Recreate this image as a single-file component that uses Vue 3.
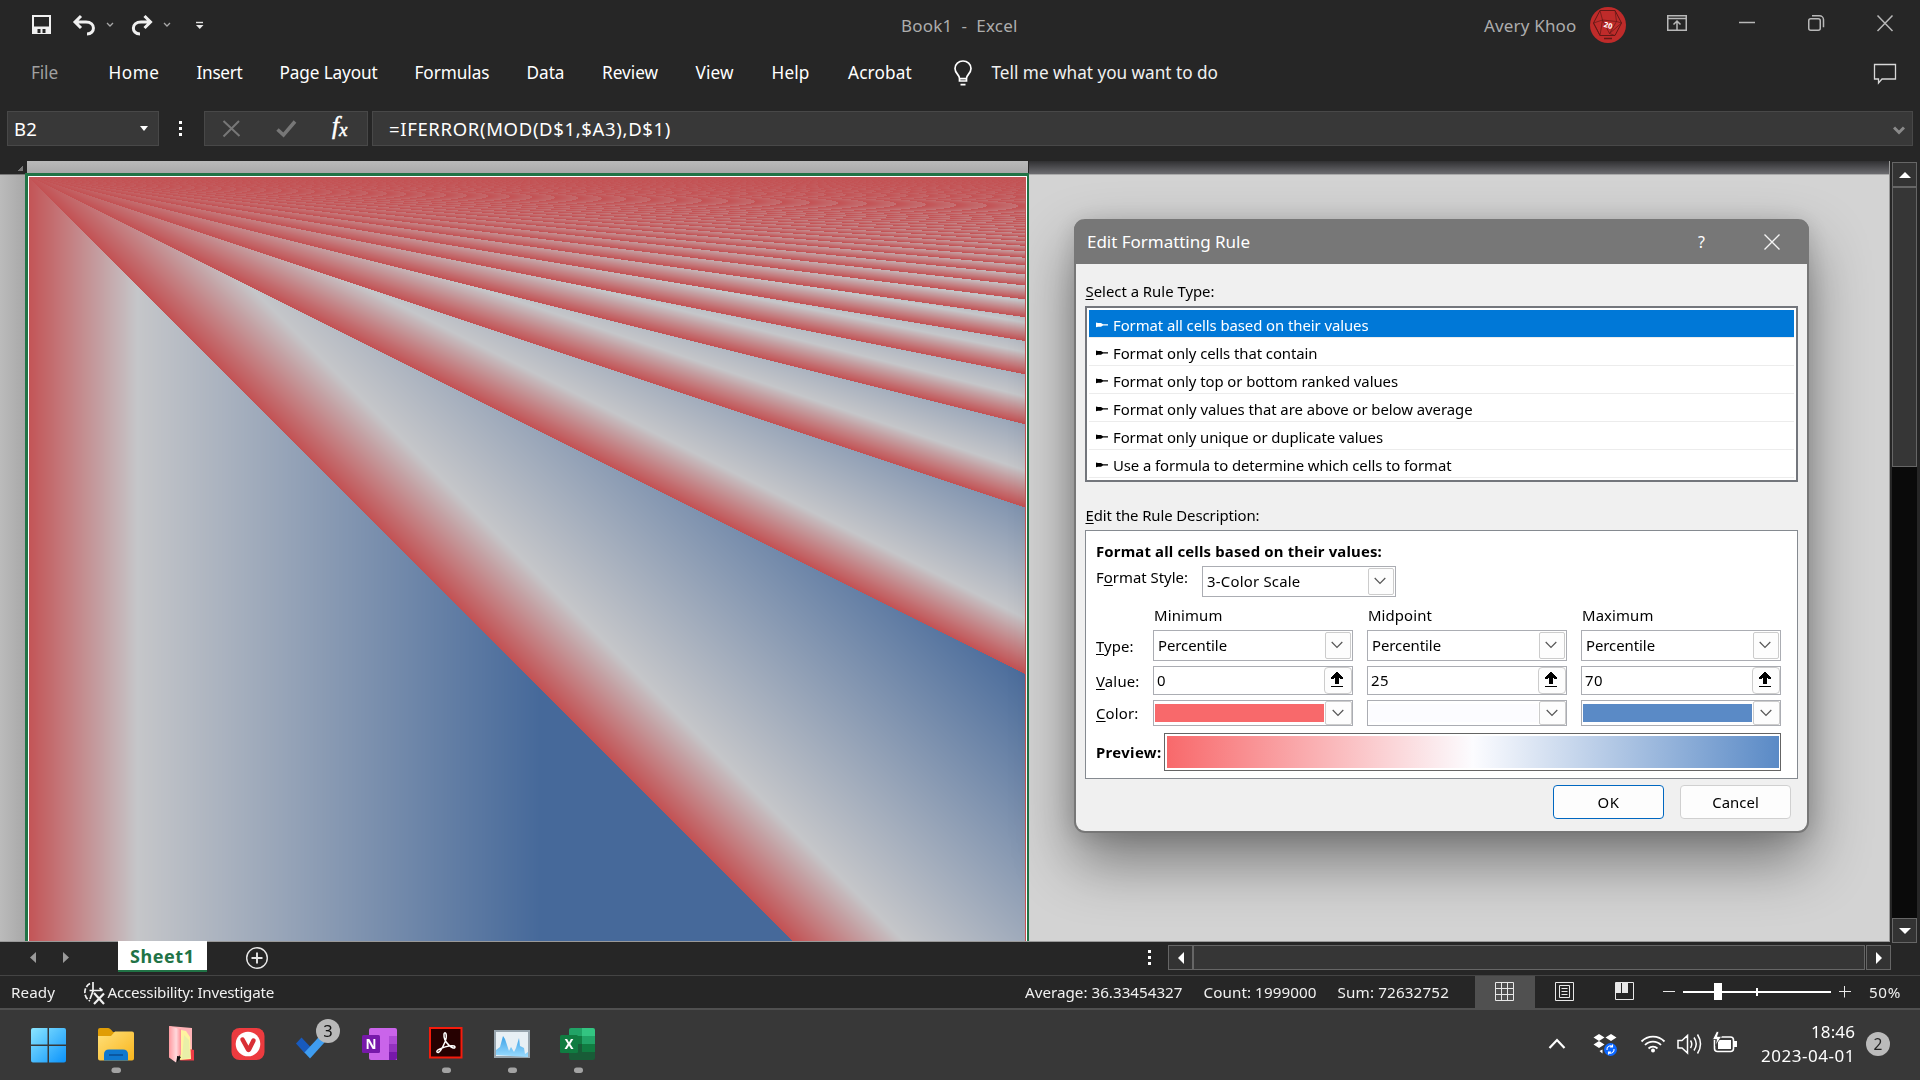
<script setup>
import { onMounted, ref } from 'vue'

// Stretches or tightens the tracking of a label so that it fills a given width.
const vFit = {
  mounted(el, binding) {
    el.style.whiteSpace = 'pre'
    const natural = el.getBoundingClientRect().width
    const n = el.textContent.length
    el.style.letterSpacing = ((binding.value - natural) / n).toFixed(3) + 'px'
  },
}

const menu = [
  { t: 'File', x: 31, w: 27, dim: true },
  { t: 'Home', x: 108.5, w: 51 },
  { t: 'Insert', x: 196.5, w: 46 },
  { t: 'Page Layout', x: 279.5, w: 98 },
  { t: 'Formulas', x: 414.5, w: 75 },
  { t: 'Data', x: 526.5, w: 38 },
  { t: 'Review', x: 602, w: 56 },
  { t: 'View', x: 695.5, w: 38 },
  { t: 'Help', x: 771.5, w: 38 },
  { t: 'Acrobat', x: 848, w: 64 },
]
menu.forEach((m, i) => {
  const prev = menu[i - 1]
  m.gap = prev ? m.x - prev.x - prev.w : m.x
})

const rules = [
  ['Format all cells based on their values', 255.5],
  ['Format only cells that contain', 204.5],
  ['Format only top or bottom ranked values', 285],
  ['Format only values that are above or below average', 359.5],
  ['Format only unique or duplicate values', 270],
  ['Use a formula to determine which cells to format', 338.5],
]

const columns = [
  { head: 'Minimum', w: 68.5, value: '0', vw: 9, color: '#f8696b' },
  { head: 'Midpoint', w: 64, value: '25', vw: 18, color: '#fcfcff' },
  { head: 'Maximum', w: 71.5, value: '70', vw: 18, color: '#5a8ac6' },
]

const sheet = ref(null)

// Three-colour scale stops: value, r, g, b
const stops = [
  [0, 195, 82, 84],
  [111, 197, 198, 201],
  [514, 70, 105, 154],
]
function shade(v) {
  if (v >= stops[2][0]) return stops[2].slice(1)
  const k = v < stops[1][0] ? 0 : 1
  const a = stops[k]
  const b = stops[k + 1]
  const f = (v - a[0]) / (b[0] - a[0])
  return [1, 2, 3].map((i) => a[i] + (b[i] - a[i]) * f)
}

onMounted(() => {
  const c = sheet.value
  const g = c.getContext('2d')
  const img = g.createImageData(c.width, c.height)
  const lut = Array.from({ length: 1001 }, (_, v) => shade(v))
  let p = 0
  for (let y = 0; y < c.height; y++) {
    for (let x = 0; x < c.width; x++) {
      const v = x === c.width - 1 ? 0 : (x + 3) % (y + 3)
      const rgb = lut[v]
      img.data[p++] = rgb[0]
      img.data[p++] = rgb[1]
      img.data[p++] = rgb[2]
      img.data[p++] = 255
    }
  }
  g.putImageData(img, 0, 0)
})
</script>

<template>
  <div class="screen">
    <header class="titlebar">
      <svg class="qat" width="230" height="50" viewBox="0 0 230 50" fill="none">
        <path d="M32 15h19v19H32z" fill="#f0f0f0" />
        <path d="M34 17h15v9.500H34z" fill="#262626" />
        <path d="M37.500 29h8v4h-8z" fill="#262626" />
        <path d="M40.500 29h2v4h-2z" fill="#f0f0f0" />
        <path d="M81 16 75 22l6 6M76 22h10c10 0 9.500 12 1 12" stroke="#f0f0f0" stroke-width="3" />
        <path d="M107 23l3 3 3-3M164 23l3 3 3-3" stroke="#a8a8a8" stroke-width="1.300" />
        <path d="M144.500 16l6 6-6 6M150 22h-9c-10 0-10 12-1 12" stroke="#f0f0f0" stroke-width="3" />
        <path d="M196 22.500h7" stroke="#e0e0e0" stroke-width="1.400" />
        <path d="M196 25h7.500l-3.750 4z" fill="#e8e8e8" />
      </svg>
      <span class="doc"><span v-fit="116.500">Book1&nbsp; - &nbsp;Excel</span></span>
      <span class="user"><span v-fit="92.500">Avery Khoo</span></span>
      <svg class="winctl" width="340" height="50" viewBox="1580 0 340 50" fill="none">
        <circle cx="1608" cy="25" r="18" fill="#bf2b2a" />
        <g stroke="#611816" stroke-width="1">
          <path d="M1600 10.500h15l6.500 12.500-6.500 12.500h-15l-6.500-12.500z" />
          <path d="M1600 10.500l2.500 9.500 14 1.500-1.500-11zM1602.500 20l-9 3 6.500 12.500 2.500-15.500 7 13.500 12-10.500-5-1.500-7 12 5.500 2" stroke-width=".7" />
        </g>
        <text x="1604" y="28" font-size="7.500" font-weight="700" fill="#fff" transform="rotate(15 1608 25)">20</text>
        <path d="M1604 38.500h8" stroke="#611816" stroke-width="1.500" />
        <g stroke="#b8b8b8" stroke-width="1.500">
          <path d="M1667.750 15.750h18.500v14.500h-18.500zM1668 18.500h18M1677 29.500v-8.500M1673.500 24.500l3.500-3.500 3.500 3.500" />
          <path d="M1739 22.500h16" />
          <rect x="1808.750" y="18.750" width="11.500" height="11.500" rx="2" />
          <path d="M1812 15.750h7.500a4 4 0 0 1 4 4v7.500" />
          <path d="M1877.500 15.500l15 15.500M1892.500 15.500l-15 15.500" />
        </g>
      </svg>
    </header>

    <nav class="menu">
      <span v-for="m in menu" :key="m.t" class="mi" :class="{ dim: m.dim }" :style="{ marginLeft: m.gap + 'px', width: m.w + 'px' }"><span v-fit="m.w">{{ m.t }}</span></span>
      <svg class="bulb" width="20" height="28" viewBox="0 0 20 28" fill="none" stroke="#fff" stroke-width="1.700">
        <path d="M6.500 18.500c0-4-4.500-5-4.500-10a8 7.500 0 0 1 16 0c0 5-4.500 6-4.500 10v2.500h-7zM6.500 18.700h7M7.500 24.700h5" />
      </svg>
      <span class="tell"><span v-fit="226.500">Tell me what you want to do</span></span>
      <svg class="comment" width="24" height="24" viewBox="0 0 24 24" fill="none" stroke="#d8d8d8" stroke-width="1.300">
        <path d="M1.500 2.500h21v14.500H9L5.500 21v-4h-4z" />
      </svg>
    </nav>

    <section class="formulabar">
      <div class="namebox"><span v-fit="23">B2</span><i class="tri"></i></div>
      <div class="dots"><i></i><i></i><i></i></div>
      <div class="fbuttons">
        <svg width="162" height="33" viewBox="0 0 162 33" fill="none">
          <path d="M18.500 9l16 15M34 9L18.500 24.500" stroke="#777" stroke-width="2" />
          <path d="M72.500 17.500l6 5.500L90 9.500" stroke="#777" stroke-width="3.500" />
          <text x="127" y="22" class="fx">f</text>
          <text x="134" y="24" class="fx small">x</text>
        </svg>
      </div>
      <div class="formula">
        <span v-fit="282">=IFERROR(MOD(D$1,$A3),D$1)</span>
        <svg width="12" height="9" viewBox="0 0 12 9" fill="none" stroke="#8a8a8a" stroke-width="3"><path d="M1 1.500l5 5 5-5" /></svg>
      </div>
    </section>

    <main class="work">
      <div class="rowhead">
        <div class="corner"><i></i></div>
        <div class="rows"></div>
      </div>
      <div class="cells">
        <div class="colhead"></div>
        <div class="selection"><canvas ref="sheet" width="997" height="764"></canvas></div>
      </div>
      <div class="empty"><div class="emptyhead"></div></div>
      <div class="vscroll">
        <div class="sbtn"><i class="up"></i></div>
        <div class="vthumb"></div>
        <div class="vtrack"></div>
        <div class="sbtn"><i class="down"></i></div>
      </div>
    </main>

    <section class="tabs">
      <svg class="tabnav" width="118" height="33" viewBox="0 0 118 33" fill="#9a9a9a"><path d="M36 10v11l-6-5.500zM63 10v11l6-5.500z" /></svg>
      <div class="tab"><span v-fit="64.500">Sheet1</span></div>
      <svg class="add" width="24" height="24" viewBox="0 0 24 24" fill="none" stroke="#e8e8e8"><circle cx="12" cy="12" r="10.300" stroke-width="1.400" /><path d="M12 6.500v11M6.500 12h11" stroke-width="1.900" /></svg>
      <div class="dots tabdots"><i></i><i></i><i></i></div>
      <div class="hscroll">
        <div class="sbtn"><i class="left"></i></div>
        <div class="hthumb"></div>
        <div class="sbtn"><i class="right"></i></div>
      </div>
    </section>

    <footer class="status">
      <span class="s1"><span v-fit="44">Ready</span></span>
      <svg class="acc" width="24" height="24" viewBox="0 0 24 24" fill="none" stroke="#f0f0f0" stroke-width="1.700">
        <path d="M8 2.500A10 10 0 0 0 8 20" stroke-dasharray="5 1.500" />
        <path d="M11 1v10M7.500 9.500h13M17.500 7l3 2.500M11 10l-3 8" />
        <path d="M12 12l10 11M22 12.500l-10 10.500" stroke-width="2.200" />
      </svg>
      <span class="s2"><span v-fit="166.500">Accessibility: Investigate</span></span>
      <span class="s3"><span v-fit="157.500">Average: 36.33454327</span></span>
      <span class="s4"><span v-fit="113">Count: 1999000</span></span>
      <span class="s5"><span v-fit="111.500">Sum: 72632752</span></span>
      <svg class="views" width="376" height="32" viewBox="1475 976 376 32" fill="none" stroke="#e8e8e8" stroke-width="1">
        <path d="M1475 976h60v32h-60z" fill="#505050" stroke="none" />
        <path d="M1495.500 982.500h18v18h-18zM1501.500 982.500v18M1507.500 982.500v18M1495.500 988.500h18M1495.500 994.500h18" />
        <path d="M1555.500 982.500h18v18h-18zM1559.500 985.500h10v12h-10zM1561.500 988.500h6M1561.500 991.500h6M1561.500 994.500h6" />
        <path d="M1615.500 982.500h18v17h-18z" /><path d="M1616 983h5v10h-5zM1622 983h6v10h-6z" fill="#e8e8e8" stroke="none" />
        <path d="M1663 991.500h12M1839 991.500h12M1844.500 986v11.500" />
        <path d="M1683 992h148" stroke="#fff" stroke-width="2" /><path d="M1714 983h8v17h-8zM1756 988h2v8h-2z" fill="#fff" stroke="none" />
      </svg>
      <span class="s6"><span v-fit="32">50%</span></span>
    </footer>

    <footer class="taskbar">
      <svg class="apps" width="620" height="70" viewBox="0 1010 620 70">
        <defs>
          <linearGradient id="win" x1="0" y1="0" x2="1" y2="1"><stop offset="0" stop-color="#8be6ff" /><stop offset="1" stop-color="#0b93fb" /></linearGradient>
          <linearGradient id="fold" x1="0" y1="0" x2="1" y2="1"><stop offset="0" stop-color="#ffe07a" /><stop offset="1" stop-color="#f9b51c" /></linearGradient>
          <linearGradient id="pink" x1="0" y1="0" x2="1" y2="0"><stop offset="0" stop-color="#ff9aa0" /><stop offset=".6" stop-color="#ffd9dc" /><stop offset="1" stop-color="#ff8f95" /></linearGradient>
          <linearGradient id="perf" x1="0" y1="0" x2="0" y2="1"><stop offset="0" stop-color="#3aa0e6" /><stop offset="1" stop-color="#9bdcff" /></linearGradient>
        </defs>
        <path fill="url(#win)" d="M33 1028h14.500v16.500H31V1030q0-2 2-2zM49 1028h15q2 0 2 2v14.500H49zM31 1046h16.500v16.500H33q-2 0-2-2zM49 1046h17v14.500q0 2-2 2H49z" />
        <path fill="#e09d06" d="M98 1030q0-2 2-2h8q2 0 5 4h8v8H98z" />
        <path fill="url(#fold)" d="M98 1036h13l4-4.500h17q2 0 2 2v25q0 2-2 2h-32q-2 0-2-2z" />
        <path fill="#0f78cf" d="M104 1060.500v-6q0-5 5-5h14q5 0 5 5v6z" /><path d="M109 1055h14" stroke="#0a4c92" stroke-width="1.500" />
        <path fill="#ffb3b7" d="M169 1026l23 2v22l-8 4z" />
        <path fill="#f03b46" d="M190 1049l4 1v10.500h-14z" />
        <path fill="#fff3a0" d="M181 1030l5 1 4 6 1 22-11 1z" />
        <path fill="#e9efa8" d="M184 1035l5 5 1 18-8 1z" />
        <path fill="url(#pink)" d="M169 1026l12 3.500v25l-4 3-1 5-7-5z" />
        <path d="M177 1056l4 1-4 5z" fill="#111" />
        <rect x="231.500" y="1028" width="33" height="32" rx="8" fill="#ec3b3f" />
        <circle cx="248" cy="1044" r="12.300" fill="#fff" />
        <path d="M242.500 1039.500l5.500 10q.5 1 1 0l4.500-9" fill="none" stroke="#d92f35" stroke-width="4.500" stroke-linecap="round" />
        <path fill="#185abd" d="M296 1043.500l5.500-6 9 9.500-5.500 6.500z" /><path fill="#3f9df0" d="M304.500 1052.500l19-20.500 5 6-18.500 20.500z" />
        <circle cx="328" cy="1031" r="12" fill="#b9b9b9" />
        <text x="328" y="1037" text-anchor="middle" font-size="16.500" fill="#111">3</text>
        <path fill="#ca64ea" d="M371 1028h24q2 0 2 2v30h-26q-2 0-2-2v-28q0-2 2-2z" /><path fill="#ae4bd5" d="M389 1036h8v8h-8z" /><path fill="#9332bf" d="M389 1044h8v8h-8z" /><path fill="#7719aa" d="M389 1052h8v6q0 2-2 2h-6z" />
        <rect x="362" y="1035" width="18" height="18" rx="1.500" fill="#7719aa" />
        <text x="371" y="1049" text-anchor="middle" font-size="13.500" font-weight="700" fill="#fff">N</text>
        <path d="M430 1028h31.500v29.500H430z" fill="#260101" stroke="#f51b0c" stroke-width="2" />
        <path d="M437 1052c-2-3 18-9 18-5 0 4-12-4-11-13 1-3 4 0 1 8-3 7-6 12-8 10z" fill="none" stroke="#fff" stroke-width="1.500" />
        <path d="M495 1031h34v26h-34z" fill="#e8f0f5" stroke="#98a5ae" stroke-width="2" />
        <path d="M496 1055v-5l4-3 3-11 2 3 4 12 2-4 3 5 2-4 3-10 1 8 4 2 1 6 3-2v5z" fill="url(#perf)" />
        <path fill="#21a366" d="M571 1028h11v8h-13v-6q0-2 2-2z" /><path fill="#33c481" d="M582 1028h11q2 0 2 2v6h-13z" /><path fill="#107c41" d="M569 1036h13v8h-13zM582 1044h13v8h-13z" /><path fill="#21a366" d="M582 1036h13v8h-13z" /><path fill="#185c37" d="M569 1044h13v8h13v6q0 2-2 2h-22q-2 0-2-2z" />
        <rect x="560" y="1035" width="18" height="18" rx="1.500" fill="#107c41" />
        <text x="569" y="1049" text-anchor="middle" font-size="13.500" font-weight="700" fill="#fff">X</text>
        <g fill="#a3a3a3"><rect x="111.500" y="1067.500" width="9.500" height="5.500" rx="2.700" /><rect x="442" y="1067.500" width="9" height="5.500" rx="2.700" /><rect x="508" y="1067.500" width="9" height="5.500" rx="2.700" /><rect x="574" y="1067.500" width="9" height="5.500" rx="2.700" /></g>
      </svg>
      <svg class="tray" width="210" height="70" viewBox="1540 1010 210 70" fill="none" stroke="#fff" stroke-width="1.800">
        <path d="M1549.500 1048l7.500-8 7.500 8" stroke-width="2.200" />
        <path fill="#fff" stroke="none" d="M1593.500 1037.500l5.500-3.500 5.500 3.500-5.500 3.500zM1605.500 1037.500l5.500-3.500 5.500 3.500-5.500 3.500zM1593.500 1044.500l5.500-3.500 5.500 3.500-5.500 3.500zM1599.500 1051l3-1.500v4z" />
        <circle cx="1610.500" cy="1049.500" r="6.500" fill="#0a66ff" stroke="none" />
        <path d="M1607 1050a3.500 3.500 0 0 1 5.500-3.500M1614 1049a3.500 3.500 0 0 1-5.500 3.500M1612.500 1044.500v2.500h-2.500M1608.500 1054.500v-2.500h2.500" stroke-width="1.100" />
        <path d="M1641.500 1041.500a16 16 0 0 1 23 0M1645 1045a11 11 0 0 1 16 0M1648.500 1048.500a6.500 6.500 0 0 1 9 0" />
        <circle cx="1653" cy="1050.500" r="2" fill="#fff" stroke="none" />
        <path d="M1678 1040.500h4l5.500-5v17.500l-5.500-5h-4zM1690.500 1040.500q2.500 3.500 0 7.500M1694 1037.500q4.500 6.500 0 13M1697.500 1034.500q6 9.500 0 19" stroke-width="1.500" />
        <rect x="1714.500" y="1037" width="19" height="14.500" rx="3" stroke-width="1.600" />
        <path d="M1718 1040h13v9h-13zM1734 1041h3v6h-3z" fill="#fff" stroke="none" />
        <path d="M1716.500 1031.500l-4 8h4l-1 6 6-9h-4l1.500-5z" fill="#fff" stroke="#383838" stroke-width=".8" />
      </svg>
      <div class="clock"><span v-fit="44">18:46</span><br /><span v-fit="94">2023-04-01</span></div>
      <div class="badge">2</div>
    </footer>

    <div class="dialog">
      <div class="dtitle">
        <span v-fit="163">Edit Formatting Rule</span>
        <span class="q">?</span>
        <svg width="16" height="16" viewBox="0 0 16 16" fill="none" stroke="#f4f4f4" stroke-width="1.400"><path d="M.5.500l15 15M15.500.500l-15 15" /></svg>
      </div>
      <div class="dlabel l1"><span v-fit="129">​<u>S</u>elect a Rule Type:</span></div>
      <div class="list">
        <div v-for="(r, i) in rules" :key="i" class="rule" :class="{ on: i === 0 }">
          <svg width="13" height="6" viewBox="0 0 13 6" fill="currentColor"><path d="M0 .5l2 .5h3l2 1.200h5v1.200H7L5 4.700H2L0 5.200z" /></svg>
          <span v-fit="r[1]">{{ r[0] }}</span>
        </div>
      </div>
      <div class="dlabel l2"><span v-fit="174"><u>E</u>dit the Rule Description:</span></div>
      <div class="panel">
        <div class="head"><b v-fit="286">Format all cells based on their values:</b></div>
        <div class="style">
          <span class="stylelab"><span v-fit="92">F<u>o</u>rmat Style:</span></span>
          <div class="combo sc"><span v-fit="93.500">3-Color Scale</span><div class="cbtn"><svg width="12" height="8" viewBox="0 0 12 8"><path d="M.7 1l5.300 5.300L11.300 1" /></svg></div></div>
        </div>
        <div class="fields">
          <div class="labs">
            <div class="lt"><span v-fit="37.500"><u>T</u>ype:</span></div>
            <div class="lv"><span v-fit="43.500"><u>V</u>alue:</span></div>
            <div class="lc"><span v-fit="42.500"><u>C</u>olor:</span></div>
          </div>
          <div v-for="c in columns" :key="c.head" class="col">
            <div class="chead"><span v-fit="c.w">{{ c.head }}</span></div>
            <div class="combo"><span v-fit="69">Percentile</span><div class="cbtn"><svg width="12" height="8" viewBox="0 0 12 8"><path d="M.7 1l5.300 5.300L11.300 1" /></svg></div></div>
            <div class="combo val"><span v-fit="c.vw">{{ c.value }}</span><div class="cbtn"><svg class="pick" width="14" height="16" viewBox="0 0 14 16"><path d="M6 0h2v1h1v1h1v1h1v1h1v1h1v2h-3V6H9v6H5V6H4v1H1V5h1V4h1V3h1V2h1V1h1zM1 14h12v1H1z" /></svg></div></div>
            <div class="combo clr"><div class="swatch" :style="{ background: c.color }"></div><div class="cbtn"><svg width="12" height="8" viewBox="0 0 12 8"><path d="M.7 1l5.300 5.300L11.300 1" /></svg></div></div>
          </div>
        </div>
        <div class="preview"><b v-fit="65.500">Preview:</b><div class="pbox"><div></div></div></div>
      </div>
      <div class="buttons">
        <button class="ok"><span v-fit="22">OK</span></button>
        <button><span v-fit="46.500">Cancel</span></button>
      </div>
    </div>
  </div>
</template>

<style>
body { margin: 0; overflow: hidden; background: #262626; }
</style>

<style scoped>
* { box-sizing: border-box; }
.screen { position: relative; width: 1920px; height: 1080px; overflow: hidden; display: flex; flex-direction: column; background: #262626; color: #fff; font-family: "Noto Sans", "Open Sans", sans-serif; font-size: 15px; white-space: nowrap; }
svg { flex: none; display: block; }
.titlebar { height: 50px; display: flex; font-size: 17px; line-height: 51px; color: #adadad; }
.doc { margin-left: 671px; width: 120px; }
.user { margin-left: 463px; width: 96px; }
.menu { height: 61px; display: flex; font-size: 17.200px; line-height: 45px; }
.mi, .tell { flex: none; }
.dim { color: #a0a0a0; }
.bulb { margin: 10px 0 0 41px; }
.tell { margin-left: 18.500px; width: 230px; color: #f0f0f0; }
.comment { margin: 12px 0 0 651.500px; }
.formulabar { height: 50px; display: flex; align-items: flex-start; padding-left: 7px; font-size: 18.500px; line-height: 33px; }
.namebox, .fbuttons, .formula { height: 35px; background: #383838; border: 1px solid #484848; display: flex; }
.namebox { width: 152px; padding: 0 10px 0 6px; justify-content: space-between; align-items: center; }
.tri { border: 4px solid transparent; border-top: 5px solid #fff; border-bottom: 0; margin-top: -1px; }
.dots { width: 3px; height: 15px; margin: 10px 22px 0 20px; display: flex; flex-direction: column; justify-content: space-between; }
.dots i { width: 3px; height: 3px; background: #fff; }
.fbuttons { width: 164px; }
.fx { font: italic 400 25px "Liberation Serif", serif; fill: #fff; stroke: #fff; stroke-width: .5px; }
.fx.small { font-size: 19px; }
.formula { margin-left: 4px; width: 1541px; padding: 0 7px 0 16px; justify-content: space-between; }
.formula svg { margin-top: 14px; }
.work { height: 781px; display: flex; }
.rowhead { width: 25px; display: flex; flex-direction: column; }
.corner { height: 14px; display: flex; justify-content: flex-end; padding: 4px 2px 0 0; border-bottom: 1px solid #777; }
.corner i { width: 6px; height: 6px; background: linear-gradient(135deg, transparent 50%, #777 50%); }
.rows { flex: 1; background: linear-gradient(90deg, #bbb, #a8a8a8); border-bottom: 1px solid #999; }
.cells { width: 1004px; display: flex; flex-direction: column; border-bottom: 1px solid #999; overflow: hidden; }
.colhead { height: 12px; margin: 0 1px 0 2px; background: linear-gradient(#bababa, #a9a9a9); }
.selection { height: 769px; border: solid #217346; border-width: 3px 2px 0 3px; }
.selection canvas { display: block; border: 1px solid #fff; border-width: 1px 1px 0; width: 999px; height: 765px; }
.empty { width: 861px; background: #d3d3d3; border-right: 1px solid #999; border-bottom: 1px solid #999; }
.emptyhead { height: 14px; background: linear-gradient(#303032, #6c6c70); border-bottom: 1px solid #aaa; }
.vscroll { margin: 1px 0 -1px 2px; width: 25px; height: 781px; display: flex; flex-direction: column; }
.sbtn { width: 25px; height: 25px; flex: none; background: #333; border: 1px solid #666; display: flex; align-items: center; justify-content: center; }
.up { border: 6px solid transparent; border-bottom-color: #fff; border-top: 0; }
.down { border: 6px solid transparent; border-top-color: #fff; border-bottom: 0; }
.left { border: 6px solid transparent; border-right-color: #fff; border-left: 0; }
.right { border: 6px solid transparent; border-left-color: #fff; border-right: 0; }
.vthumb { height: 280px; background: #363636; border: 1px solid #666; }
.vtrack { flex: 1; background: #0a0a0a; }
.tabs { height: 34px; display: flex; border-bottom: 1px solid #444; }
.tab { width: 89px; height: 31px; margin-top: -1px; background: #fff; border-bottom: 2px solid #217346; color: #217346; font-size: 18px; font-weight: 700; line-height: 30px; padding-left: 12px; }
.add { margin: 4px 0 0 38px; }
.tabdots { height: 15px; margin: 8px 17px 0 879px; }
.hscroll { margin-top: 3px; display: flex; }
.hthumb { width: 672px; height: 25px; margin-right: 1px; background: #363636; border: 1px solid #666; }
.status { height: 34px; display: flex; border-bottom: 2px solid #505050; line-height: 32px; font-size: 15.200px; color: #f0f0f0; }
.status > span { flex: none; }
.s1 { width: 44px; margin-left: 11px; }
.acc { margin: 5px 0 0 26.500px; }
.s2 { width: 168px; margin-left: 2px; }
.s3 { width: 160px; margin-left: 749.500px; }
.s4 { width: 115px; margin-left: 18.500px; }
.s5 { width: 114px; margin-left: 19px; }
.views { margin-left: 23.500px; }
.s6 { margin-left: 18px; }
.taskbar { height: 70px; display: flex; background: #383838; }
.tray { margin-left: 920px; }
.clock { width: 105px; text-align: right; font-size: 17px; line-height: 24px; padding-top: 10px; }
.badge { width: 24px; height: 24px; margin: 22px 0 0 11px; border-radius: 50%; background: #bbb; color: #222; text-align: center; line-height: 24px; font-size: 15.500px; }

.dialog { position: absolute; left: 1074px; top: 219px; width: 735px; height: 614px; border: 2px solid #777; border-top: 0; border-radius: 11px; background: #f0f0f0; color: #000; font-size: 14.900px; box-shadow: 0 28px 60px rgba(0, 0, 0, .44), 0 2px 24px rgba(0, 0, 0, .14); display: flex; flex-direction: column; }
.dtitle { height: 45px; margin: 0 -2px; border-radius: 11px 11px 0 0; background: #777; color: #fff; font-size: 17px; line-height: 46px; display: flex; align-items: center; padding-left: 13px; }
.dtitle .q { margin-left: auto; margin-right: 59px; font-size: 16px; }
.dtitle svg { margin-right: 29px; }
.dlabel { padding-left: 9.500px; line-height: 20px; }
u { text-underline-offset: 2px; text-decoration-thickness: 1px; }
.l1 { margin-top: 17px; height: 25px; }
.list { margin: 0 9px; height: 176px; background: #fff; border: 2px solid #73767c; padding: 2px; }
.rule { height: 28px; border-bottom: 1px solid #ececec; display: flex; align-items: center; padding: 3px 0 0 7px; line-height: 20px; }
.rule svg { margin: -1px 4px 0 0; }
.rule.on { background: #0078d7; color: #fff; }
.l2 { margin-top: 23px; height: 25px; }
.panel { margin: 0 9px; height: 249px; background: #fff; border: 1px solid #858a90; display: flex; flex-direction: column; }
.head { margin: 9px 0 0 10px; line-height: 22px; height: 26px; }
.style { display: flex; margin-left: 10px; }
.stylelab { width: 106px; line-height: 22px; }
.combo { width: 200px; height: 31px; border: 1px solid #abadb3; background: #fff; display: flex; justify-content: space-between; padding: 1px 1px 1px 4px; line-height: 26px; }
.combo.sc { width: 194px; padding-left: 4px; }
.cbtn { width: 26px; height: 27px; border: 1px solid #ccc; border-radius: 2px; background: #fdfdfd; display: flex; align-items: center; justify-content: center; padding: 0 2px 1px 0; }
.cbtn path { fill: none; stroke: #555; stroke-width: 1.200; }
.cbtn .pick path { fill: #000; stroke: none; }
.fields { display: flex; margin-left: 10px; }
.labs { width: 57px; line-height: 20px; }
.lt { margin-top: 39px; height: 35px; }
.lv { height: 32px; }
.col { margin-right: 14px; }
.chead { height: 33px; padding: 8px 0 0 1px; line-height: 20px; }
.val { height: 29px; margin-top: 5px; padding: 0 0 0 3px; line-height: 27px; }
.val .cbtn { width: 28px; border-radius: 4px; }
.clr { height: 26px; margin-top: 5px; padding: 0 0 0 1px; }
.clr .cbtn { width: 27px; height: 24px; padding-right: 1px; }
.swatch { width: 169px; height: 18px; margin-top: 3px; }
.preview { display: flex; margin: 7px 0 0 10px; line-height: 38px; }
.pbox { width: 617px; height: 38px; margin-left: 2.500px; border: 1px solid #646464; padding: 2px 1px 2px 2px; }
.pbox div { height: 32px; background: linear-gradient(90deg, #f8696b, #fcfcff 50%, #5a8ac6); }
.buttons { display: flex; justify-content: flex-end; gap: 16px; margin: 6px 16px 0 0; }
button { width: 111px; height: 34px; border: 1px solid #d0d0d0; border-radius: 4px; background: #fdfdfd; font: inherit; color: #000; padding: 0; line-height: 31px; }
button.ok { border-color: #0067c0; }
</style>
